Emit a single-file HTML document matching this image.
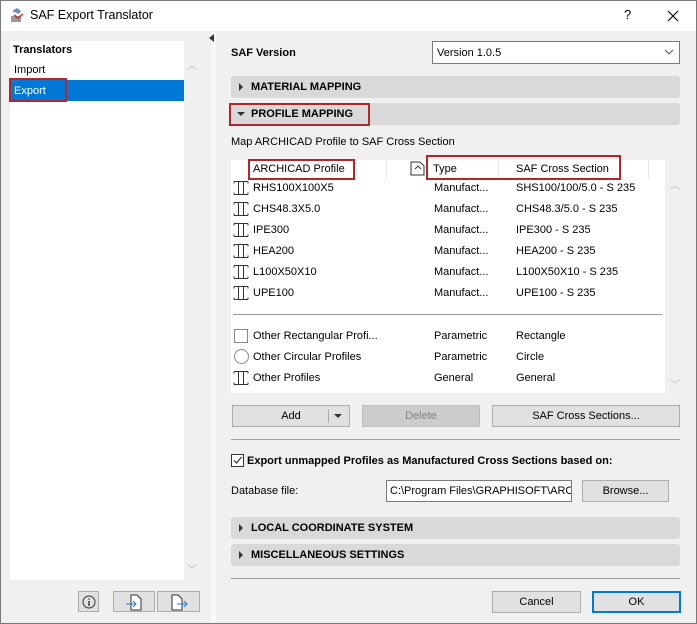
<!DOCTYPE html>
<html><head><meta charset="utf-8"><style>
*{box-sizing:border-box;margin:0;padding:0}
body{width:697px;height:624px;position:relative;overflow:hidden;background:#f0f0f0;font-family:"Liberation Sans",sans-serif;font-size:11px;color:#000}
.a{position:absolute}
.t{position:absolute;white-space:nowrap;line-height:14px}
.bar{position:absolute;left:231px;width:449px;height:22px;background:#d9d9d9;border-radius:3px}
.bar span{position:absolute;left:20px;top:4px;font-weight:bold;line-height:14px;font-size:11px}
.bar i{position:absolute;left:8px;top:7px;width:0;height:0;border-left:4px solid #333;border-top:4px solid transparent;border-bottom:4px solid transparent}
.btn{position:absolute;height:22px;background:#e1e1e1;border:1px solid #adadad;text-align:center;line-height:20px}
.red{position:absolute;border:2px solid #b3262b}
.ib{position:absolute;left:233px;width:16px;height:14px}
</style></head><body>
<div class="a" style="left:0;top:0;width:697px;height:624px;border:1px solid #7a7a7a"></div>
<div class="a" style="left:1px;top:1px;width:695px;height:30px;background:#fff"></div>
<svg class="a" style="left:9px;top:7px" width="18" height="18"><path d="M3 4l5-3 4 3-2 3z" fill="#6a8bc4"/><path d="M2 9h10v6H2z" fill="#999"/><path d="M5 8l4 3 5-4" stroke="#c33" fill="none" stroke-width="1.5"/></svg>
<div class="t" style="left:30px;top:8px;font-size:12.5px">SAF Export Translator</div>
<div class="t" style="left:624px;top:8px;font-size:13px">?</div>
<svg class="a" style="left:667px;top:10px" width="12" height="12"><path d="M1 1l10 10M11 1L1 11" stroke="#000" stroke-width="1.1"/></svg>

<div class="a" style="left:10px;top:41px;width:174px;height:539px;background:#fff"></div>
<div class="t" style="left:13px;top:43px;font-weight:bold">Translators</div>
<div class="t" style="left:14px;top:63px">Import</div>
<div class="a" style="left:10px;top:80px;width:174px;height:21px;background:#0078d7"></div>
<div class="t" style="left:14px;top:84px;color:#fff">Export</div>
<div class="red" style="left:9px;top:78px;width:58px;height:24px"></div>
<div class="t" style="left:187px;top:60px;color:#bbb;font-size:10px">︿</div>
<div class="t" style="left:187px;top:564px;color:#bbb;font-size:10px">﹀</div>
<div class="a" style="left:211px;top:32px;width:5px;height:590px;background:#f8f8f8"></div>
<div class="a" style="left:209px;top:34px;border-right:5px solid #333;border-top:4px solid transparent;border-bottom:4px solid transparent"></div>

<div class="btn" style="left:78px;top:591px;width:21px;height:21px"><svg width="14" height="14" style="margin-top:3px"><circle cx="7" cy="7" r="6" fill="none" stroke="#333"/><path d="M7 6v5M7 3.5v1.3" stroke="#333" stroke-width="1.4"/></svg></div>
<div class="btn" style="left:113px;top:591px;width:42px;height:21px"><svg width="20" height="18" style="margin-top:1px"><path d="M7 2h6l4 4v11H7z" fill="#fff" stroke="#333"/><path d="M2 11h10M9 8l3 3-3 3" stroke="#2a7ad5" fill="none"/></svg></div>
<div class="btn" style="left:157px;top:591px;width:43px;height:21px"><svg width="20" height="18" style="margin-top:1px"><path d="M3 2h6l4 4v11H3z" fill="#fff" stroke="#333"/><path d="M8 11h10M15 8l3 3-3 3" stroke="#2a7ad5" fill="none"/></svg></div>

<div class="t" style="left:231px;top:46px;font-weight:bold">SAF Version</div>
<div class="a" style="left:432px;top:41px;width:248px;height:23px;background:#fff;border:1px solid #7a7a7a"></div>
<div class="t" style="left:437px;top:46px">Version 1.0.5</div>
<svg class="a" style="left:664px;top:49px" width="10" height="6"><path d="M1 1l4 4 4-4" stroke="#555" fill="none"/></svg>

<div class="bar" style="top:76px"><i></i><span>MATERIAL MAPPING</span></div>
<div class="bar" style="top:103px"><i style="left:6px;top:9px;border-top:4px solid #333;border-left:4px solid transparent;border-right:4px solid transparent;border-bottom:0"></i><span>PROFILE MAPPING</span></div>
<div class="red" style="left:229px;top:103px;width:141px;height:23px"></div>
<div class="t" style="left:231px;top:135px">Map ARCHICAD Profile to SAF Cross Section</div>

<div class="a" style="left:231px;top:160px;width:434px;height:233px;background:#fff"></div>
<div class="a" style="left:386px;top:160px;width:1px;height:18px;background:#e5e5e5"></div>
<div class="a" style="left:498px;top:160px;width:1px;height:18px;background:#e5e5e5"></div>
<div class="a" style="left:648px;top:160px;width:1px;height:18px;background:#e5e5e5"></div>
<svg class="a" style="left:410px;top:161px" width="16" height="15"><path d="M1 1h9l4 4v9H1z" fill="none" stroke="#333"/><path d="M5 8l3-3 3 3" stroke="#333" fill="none"/></svg>
<div class="t" style="left:253px;top:162px">ARCHICAD Profile</div>
<div class="t" style="left:433px;top:162px">Type</div>
<div class="t" style="left:516px;top:162px">SAF Cross Section</div>
<div class="red" style="left:248px;top:159px;width:107px;height:21px"></div>
<div class="red" style="left:426px;top:155px;width:195px;height:25px"></div>
<div class="t" style="left:670px;top:180px;color:#bbb;font-size:10px">︿</div>
<div class="t" style="left:670px;top:379px;color:#bbb;font-size:10px">﹀</div>

<svg width="0" height="0" style="position:absolute"><defs><symbol id="ib" viewBox="0 0 16 14"><path d="M1 .5h14M1 .5v2M15 .5v2M1 13.5h14M1 13.5v-2M15 13.5v-2M5.5 .5v13M10.5 .5v13" stroke="#333" fill="none"/></symbol></defs></svg>

<svg class="ib" style="top:181px"><use href="#ib"/></svg><div class="t" style="left:253px;top:181px">RHS100X100X5</div><div class="t" style="left:434px;top:181px">Manufact...</div><div class="t" style="left:516px;top:181px">SHS100/100/5.0 - S 235</div>
<svg class="ib" style="top:202px"><use href="#ib"/></svg><div class="t" style="left:253px;top:202px">CHS48.3X5.0</div><div class="t" style="left:434px;top:202px">Manufact...</div><div class="t" style="left:516px;top:202px">CHS48.3/5.0 - S 235</div>
<svg class="ib" style="top:223px"><use href="#ib"/></svg><div class="t" style="left:253px;top:223px">IPE300</div><div class="t" style="left:434px;top:223px">Manufact...</div><div class="t" style="left:516px;top:223px">IPE300 - S 235</div>
<svg class="ib" style="top:244px"><use href="#ib"/></svg><div class="t" style="left:253px;top:244px">HEA200</div><div class="t" style="left:434px;top:244px">Manufact...</div><div class="t" style="left:516px;top:244px">HEA200 - S 235</div>
<svg class="ib" style="top:265px"><use href="#ib"/></svg><div class="t" style="left:253px;top:265px">L100X50X10</div><div class="t" style="left:434px;top:265px">Manufact...</div><div class="t" style="left:516px;top:265px">L100X50X10 - S 235</div>
<svg class="ib" style="top:286px"><use href="#ib"/></svg><div class="t" style="left:253px;top:286px">UPE100</div><div class="t" style="left:434px;top:286px">Manufact...</div><div class="t" style="left:516px;top:286px">UPE100 - S 235</div>
<div class="a" style="left:233px;top:314px;width:429px;height:1px;background:#999"></div>
<div class="a" style="left:234px;top:329px;width:14px;height:14px;border:1px solid #888"></div><div class="t" style="left:253px;top:329px">Other Rectangular Profi...</div><div class="t" style="left:434px;top:329px">Parametric</div><div class="t" style="left:516px;top:329px">Rectangle</div>
<div class="a" style="left:234px;top:349px;width:15px;height:15px;border:1px solid #888;border-radius:50%"></div><div class="t" style="left:253px;top:350px">Other Circular Profiles</div><div class="t" style="left:434px;top:350px">Parametric</div><div class="t" style="left:516px;top:350px">Circle</div>
<svg class="ib" style="top:371px"><use href="#ib"/></svg><div class="t" style="left:253px;top:371px">Other Profiles</div><div class="t" style="left:434px;top:371px">General</div><div class="t" style="left:516px;top:371px">General</div>

<div class="btn" style="left:232px;top:405px;width:118px">Add</div>
<div class="a" style="left:328px;top:409px;width:1px;height:14px;background:#adadad"></div>
<div class="a" style="left:334px;top:414px;border-top:4px solid #333;border-left:4px solid transparent;border-right:4px solid transparent"></div>
<div class="btn" style="left:362px;top:405px;width:118px;background:#ccc;border-color:#bfbfbf;color:#838383">Delete</div>
<div class="btn" style="left:492px;top:405px;width:188px">SAF Cross Sections...</div>
<div class="a" style="left:231px;top:439px;width:449px;height:1px;background:#a0a0a0"></div>

<div class="a" style="left:231px;top:454px;width:13px;height:13px;border:1px solid #333;background:#fff"></div>
<svg class="a" style="left:232px;top:455px" width="11" height="11"><path d="M2 5.5l2.5 2.5 5-6" stroke="#333" fill="none" stroke-width="1.2"/></svg>
<div class="t" style="left:247px;top:454px;font-weight:bold">Export unmapped Profiles as Manufactured Cross Sections based on:</div>
<div class="t" style="left:231px;top:484px">Database file:</div>
<div class="a" style="left:386px;top:480px;width:186px;height:22px;background:#fff;border:1px solid #7a7a7a;overflow:hidden"><div class="t" style="left:3px;top:3px">C:\Program Files\GRAPHISOFT\ARCHICAD</div></div>
<div class="btn" style="left:582px;top:480px;width:87px">Browse...</div>

<div class="bar" style="top:517px"><i></i><span>LOCAL COORDINATE SYSTEM</span></div>
<div class="bar" style="top:544px"><i></i><span>MISCELLANEOUS SETTINGS</span></div>
<div class="a" style="left:231px;top:578px;width:449px;height:1px;background:#a0a0a0"></div>
<div class="btn" style="left:492px;top:591px;width:89px">Cancel</div>
<div class="btn" style="left:592px;top:591px;width:89px;border:2px solid #0078d7;line-height:18px">OK</div>
</body></html>
